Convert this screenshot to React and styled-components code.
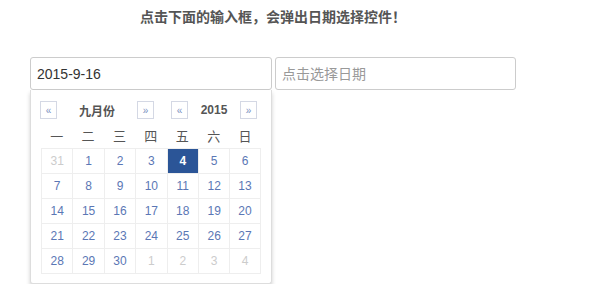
import React from 'react';
import styled, { createGlobalStyle } from 'styled-components';

const GlobalStyle = createGlobalStyle`
    body {
        margin: 0;
        background: #fff;
        font-family: "Helvetica Neue", Helvetica, Arial, "Liberation Sans", "Noto Sans CJK SC", sans-serif;
        color: #333;
    }
`;

const weekDays = ['一', '二', '三', '四', '五', '六', '日'];

// 2015年9月，周一开头
const buildWeeks = () => {
    const days = [{ n: 31, muted: true }];
    for (let i = 1; i <= 30; i++) days.push({ n: i });
    for (let i = 1; i <= 4; i++) days.push({ n: i, muted: true });
    const weeks = [];
    for (let i = 0; i < days.length; i += 7) weeks.push(days.slice(i, i + 7));
    return weeks;
};

const App = () => {
    const weeks = buildWeeks();
    return (
        <Page>
            <GlobalStyle />
            <Title>点击下面的输入框，会弹出日期选择控件！</Title>
            <InputRow>
                <Field>
                    <Input defaultValue="2015-9-16" />
                    <Picker>
                        <PickerHead>
                            <NavBtn>«</NavBtn>
                            <HeadLabel $w={80}>九月份</HeadLabel>
                            <NavBtn>»</NavBtn>
                            <Spacer />
                            <NavBtn>«</NavBtn>
                            <HeadLabel $w={52}>2015</HeadLabel>
                            <NavBtn>»</NavBtn>
                        </PickerHead>
                        <Grid>
                            {weekDays.map((d) => (
                                <WeekDay key={d}>{d}</WeekDay>
                            ))}
                            {weeks.map((week, wi) =>
                                week.map((d, di) => (
                                    <Day
                                        key={`${wi}-${di}`}
                                        $muted={d.muted}
                                        $active={!d.muted && d.n === 4}
                                    >
                                        {d.n}
                                    </Day>
                                ))
                            )}
                        </Grid>
                    </Picker>
                </Field>
                <Input placeholder="点击选择日期" />
            </InputRow>
        </Page>
    );
};

const Page = styled.div`
    padding: 0 30px;
    width: 486px;
`;

const Title = styled.h3`
    margin: 0;
    padding-top: 9px;
    height: 48px;
    box-sizing: border-box;
    text-align: center;
    font-size: 14px;
    font-weight: bold;
    color: #555;
    line-height: 17px;
`;

const InputRow = styled.div`
    display: flex;
    align-items: flex-start;
    gap: 3px;
    margin-top: 9px;
`;

const Field = styled.div`
    display: flex;
    flex-direction: column;
`;

const Input = styled.input`
    width: 242px;
    height: 33px;
    box-sizing: border-box;
    padding: 0 6px;
    border: 1px solid #ccc;
    border-radius: 3px;
    font-family: inherit;
    font-size: 14px;
    color: #333;
    outline: none;

    &::placeholder {
        color: #999;
    }
`;

const Picker = styled.div`
    width: 242px;
    height: 194px;
    box-sizing: border-box;
    padding: 10px 10px 0 10px;
    background: #fff;
    border: 1px solid #ddd;
    border-top: none;
    border-radius: 0 0 3px 3px;
    box-shadow: 0 3px 4px rgba(0, 0, 0, 0.18);
`;

const PickerHead = styled.div`
    display: flex;
    align-items: center;
    height: 20px;
    margin-left: -1px;
`;

const NavBtn = styled.span`
    width: 17px;
    height: 18px;
    box-sizing: border-box;
    border: 1px solid #d4d8e4;
    display: flex;
    align-items: center;
    justify-content: center;
    font-size: 10px;
    color: #7a8fc0;
`;

const HeadLabel = styled.span`
    width: ${(p) => p.$w}px;
    text-align: center;
    font-size: 12px;
    font-weight: bold;
    color: #555;
`;

const Spacer = styled.span`
    width: 17px;
`;

const Grid = styled.div`
    display: grid;
    grid-template-columns: repeat(7, 31.4px);
    grid-template-rows: 26px repeat(5, 25px);
    margin-top: 2px;
    border-bottom: 1px solid #eee;
`;

const WeekDay = styled.div`
    display: flex;
    align-items: center;
    justify-content: center;
    font-size: 13px;
    color: #555;
`;

const Day = styled.div`
    display: flex;
    align-items: center;
    justify-content: center;
    font-size: 12px;
    border-top: 1px solid #eee;
    border-left: 1px solid #eee;
    color: ${(p) => (p.$active ? '#fff' : p.$muted ? '#ccc' : '#5b77b5')};
    background: ${(p) => (p.$active ? '#2b5597' : '#fff')};
    font-weight: ${(p) => (p.$active ? 'bold' : 'normal')};

    &:nth-child(7n) {
        border-right: 1px solid #eee;
    }
`;

export default App;
